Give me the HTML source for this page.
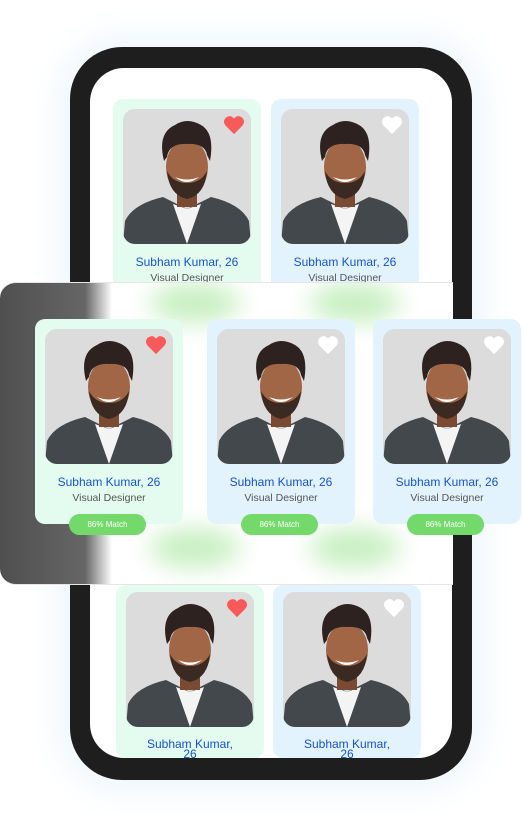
<!DOCTYPE html>
<html><head><meta charset="utf-8"><style>
*{margin:0;padding:0;box-sizing:border-box}
body{width:523px;height:835px;background:#fff;position:relative;overflow:hidden;font-family:"Liberation Sans",sans-serif}
.phone{position:absolute;left:70px;top:47px;width:402px;height:733px;background:#1e1e1e;border-radius:52px;box-shadow:0 0 35px 12px #eef6fd}
.screen{position:absolute;left:90px;top:68px;width:362px;height:690px;background:#fff;border-radius:34px;overflow:hidden}
.card{position:absolute;width:148px;border-radius:10px;text-align:center}
.g{background:#e3fcef}.b{background:#e3f3fd}
.ph{position:absolute;left:10px;top:10px;width:128px;height:135px;border-radius:12px;overflow:hidden;background:#dcdcdc}
.nm{position:absolute;left:0;right:0;color:#1553c9;font-size:12px}
.ds{position:absolute;left:0;right:0;color:#555;font-size:10.5px}
.pill{position:absolute;left:34px;width:77px;height:21px;border-radius:11px;background:#72d96a;color:#fff;font-size:8px;line-height:21px}
.band{position:absolute;left:0;top:282px;width:453px;height:303px;border-radius:16px 0 0 16px;background:linear-gradient(90deg,#4f4f4f 0,#666 85px,#fff 112px);border-top:1px solid #e6e6e6;border-bottom:1px solid #e6e6e6;overflow:hidden}
.blob{position:absolute;width:90px;height:40px;border-radius:50%;background:#c8efc2;filter:blur(12px)}
.heart{position:absolute;right:6px;top:6px;width:22px;height:20px}
</style></head><body>
<svg width="0" height="0" style="position:absolute"><defs>
<symbol id="p" viewBox="0 0 128 135">
<rect width="128" height="135" fill="#dcdcdc"/>
<path d="M0 135 L2 112 Q10 95 40 88 L64 100 L88 88 Q118 95 126 112 L128 135Z" fill="#43484c"/>
<path d="M50 95 L64 135 L78 95 L64 100Z" fill="#f4f4f4"/>
<rect x="54" y="70" width="20" height="28" fill="#7a4a32"/>
<ellipse cx="64" cy="58" rx="21" ry="28" fill="#a06646"/>
<path d="M44 62 Q46 86 64 90 Q82 86 84 62 Q78 74 64 74 Q50 74 44 62Z" fill="#3a2a22"/>
<path d="M52 68 Q64 78 76 68 Q64 73 52 68Z" fill="#fff"/>
<path d="M41 52 Q34 24 52 16 Q64 8 78 16 Q92 24 87 52 L84 46 Q82 34 64 35 Q46 34 44 48Z" fill="#2e2220"/>
</symbol>
<symbol id="h" viewBox="0 0 24 22"><path d="M12 21 L3 12 Q-1 7 3 3 Q8 -1 12 4 Q16 -1 21 3 Q25 7 21 12Z"/></symbol>
</defs></svg>
<div class="phone"></div>
<div class="screen"></div>

<div class="card g" style="left:113px;top:99px;height:200px"><div class="ph"><svg width="128" height="135"><use href="#p"/></svg><svg class="heart" fill="#f85a5a"><use href="#h"/></svg></div><div class="nm" style="top:156px">Subham Kumar, 26</div><div class="ds" style="top:173px">Visual Designer</div></div>
<div class="card b" style="left:271px;top:99px;height:200px"><div class="ph"><svg width="128" height="135"><use href="#p"/></svg><svg class="heart" fill="#fff"><use href="#h"/></svg></div><div class="nm" style="top:156px">Subham Kumar, 26</div><div class="ds" style="top:173px">Visual Designer</div></div>

<div class="card g" style="left:116px;top:585px;height:173px"><div class="ph" style="top:7px"><svg width="128" height="135"><use href="#p"/></svg><svg class="heart" fill="#f85a5a"><use href="#h"/></svg></div><div class="nm" style="top:154px;line-height:10px">Subham Kumar,<br>26</div></div>
<div class="card b" style="left:273px;top:585px;height:173px"><div class="ph" style="top:7px"><svg width="128" height="135"><use href="#p"/></svg><svg class="heart" fill="#fff"><use href="#h"/></svg></div><div class="nm" style="top:154px;line-height:10px">Subham Kumar,<br>26</div></div>

<div class="band">
<div class="blob" style="left:150px;top:0px"></div><div class="blob" style="left:310px;top:0px"></div>
<div class="blob" style="left:150px;top:245px"></div><div class="blob" style="left:310px;top:245px"></div>
</div>

<div class="card g" style="left:35px;top:319px;height:205px"><div class="ph"><svg width="128" height="135"><use href="#p"/></svg><svg class="heart" fill="#f85a5a"><use href="#h"/></svg></div><div class="nm" style="top:156px">Subham Kumar, 26</div><div class="ds" style="top:173px">Visual Designer</div><div class="pill" style="top:195px">86% Match</div></div>
<div class="card b" style="left:207px;top:319px;height:205px"><div class="ph"><svg width="128" height="135"><use href="#p"/></svg><svg class="heart" fill="#fff"><use href="#h"/></svg></div><div class="nm" style="top:156px">Subham Kumar, 26</div><div class="ds" style="top:173px">Visual Designer</div><div class="pill" style="top:195px">86% Match</div></div>
<div class="card b" style="left:373px;top:319px;height:205px"><div class="ph"><svg width="128" height="135"><use href="#p"/></svg><svg class="heart" fill="#fff"><use href="#h"/></svg></div><div class="nm" style="top:156px">Subham Kumar, 26</div><div class="ds" style="top:173px">Visual Designer</div><div class="pill" style="top:195px">86% Match</div></div>
</body></html>
